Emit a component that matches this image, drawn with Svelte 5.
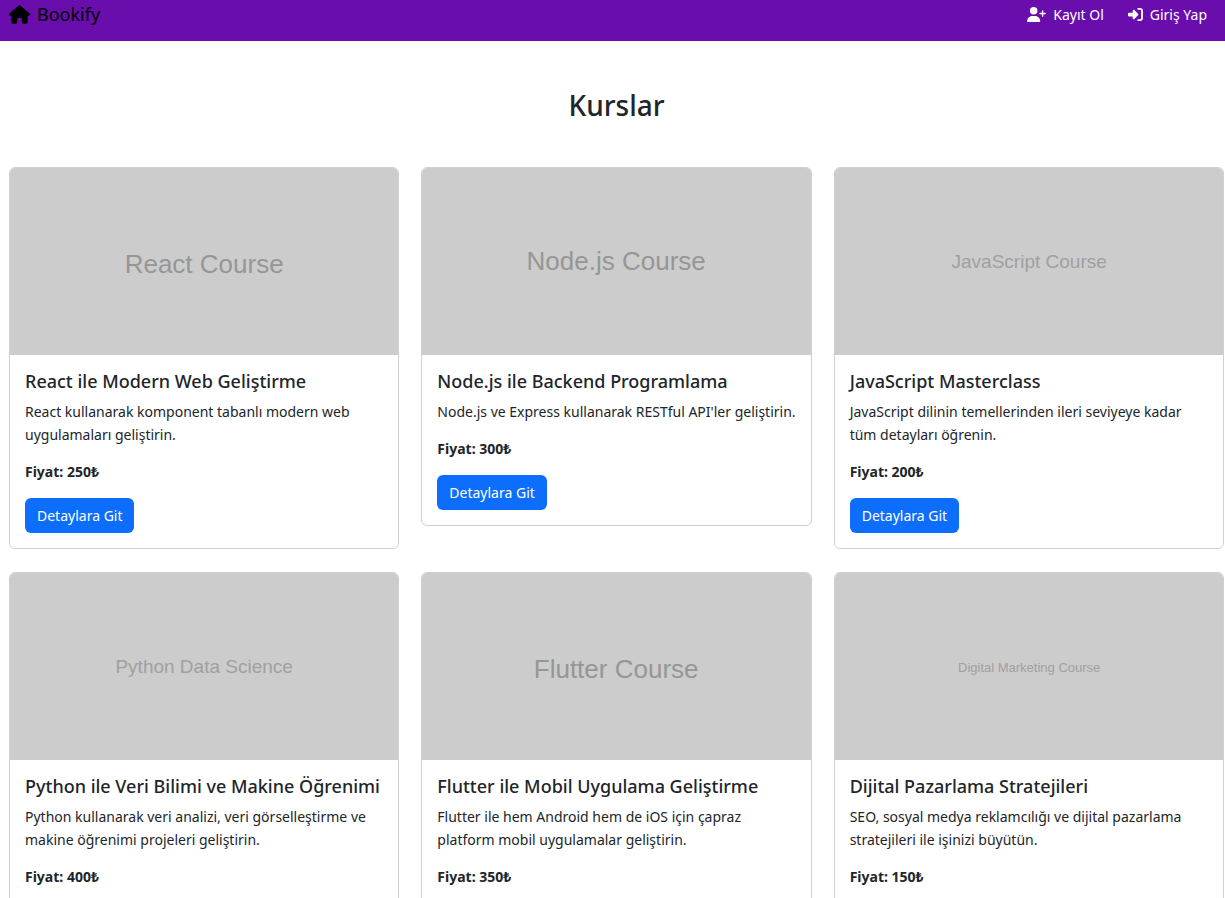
<script>
  const courses = [
    { cover: 'React Course', size: 26, baseline: 105, title: 'React ile Modern Web Geliştirme', text: 'React kullanarak komponent tabanlı modern web uygulamaları geliştirin.', price: 250 },
    { cover: 'Node.js Course', size: 26, baseline: 102, title: 'Node.js ile Backend Programlama', text: "Node.js ve Express kullanarak RESTful API'ler geliştirin.", price: 300 },
    { cover: 'JavaScript Course', size: 19, baseline: 100, title: 'JavaScript Masterclass', text: 'JavaScript dilinin temellerinden ileri seviyeye kadar tüm detayları öğrenin.', price: 200 },
    { cover: 'Python Data Science', size: 19, baseline: 100, title: 'Python ile Veri Bilimi ve Makine Öğrenimi', text: 'Python kullanarak veri analizi, veri görselleştirme ve makine öğrenimi projeleri geliştirin.', price: 400 },
    { cover: 'Flutter Course', size: 26, baseline: 105, title: 'Flutter ile Mobil Uygulama Geliştirme', text: 'Flutter ile hem Android hem de iOS için çapraz platform mobil uygulamalar geliştirin.', price: 350 },
    { cover: 'Digital Marketing Course', size: 13, baseline: 99, title: 'Dijital Pazarlama Stratejileri', text: 'SEO, sosyal medya reklamcılığı ve dijital pazarlama stratejileri ile işinizi büyütün.', price: 150 }
  ];
</script>

<header class="navbar">
  <a class="brand" href="#home">
    <svg class="house" viewBox="0 0 576 512" aria-hidden="true"><path d="M575.8 255.500c0 18-15 32.100-32 32.100h-32l.7 160.200c0 2.700-.2 5.400-.5 8.100V472c0 22.100-17.900 40-40 40H456c-1.100 0-2.200 0-3.300-.1c-1.400 .1-2.800 .1-4.200 .1H416 392c-22.100 0-40-17.900-40-40V448 384c0-17.700-14.300-32-32-32H256c-17.700 0-32 14.300-32 32v64 24c0 22.100-17.900 40-40 40H160 128.100c-1.500 0-3-.1-4.500-.2c-1.200 .1-2.400 .2-3.600 .2H104c-22.100 0-40-17.900-40-40V360c0-.9 0-1.900 .1-2.800V287.600H32c-18 0-32-14-32-32.100c0-9 3-17 10-24L266.400 8c7-7 15-8 22-8s15 2 21 7L564.800 231.500c8 7 12 15 11 24z" /></svg>
    <span>Bookify</span>
  </a>
  <nav class="links" aria-label="Hesap">
    <a href="#register">
      <svg class="user" viewBox="0 0 640 512" aria-hidden="true"><path d="M96 128a128 128 0 1 1 256 0A128 128 0 1 1 96 128zM0 482.300C0 383.800 79.800 304 178.300 304h91.400C368.200 304 448 383.800 448 482.300c0 16.400-13.300 29.700-29.700 29.700H29.700C13.300 512 0 498.700 0 482.300zM504 312V248H440c-13.300 0-24-10.700-24-24s10.700-24 24-24h64V136c0-13.300 10.700-24 24-24s24 10.700 24 24v64h64c13.300 0 24 10.700 24 24s-10.700 24-24 24H552v64c0 13.300-10.700 24-24 24s-24-10.700-24-24z" /></svg>
      <span>Kayıt Ol</span>
    </a>
    <a href="#login">
      <svg class="enter" viewBox="0 0 512 512" aria-hidden="true"><path d="M217.900 105.900L340.700 228.700c7.200 7.200 11.300 17.100 11.300 27.300s-4.100 20.100-11.300 27.300L217.900 406.100c-6.400 6.400-15 9.900-24 9.900c-18.700 0-33.900-15.200-33.900-33.900l0-62.100L32 320c-17.700 0-32-14.300-32-32l0-64c0-17.700 14.300-32 32-32l128 0 0-62.100c0-18.700 15.200-33.900 33.900-33.900c9 0 17.600 3.600 24 9.900zM352 416l64 0c17.700 0 32-14.300 32-32l0-256c0-17.700-14.300-32-32-32l-64 0c-17.700 0-32-14.300-32-32s14.300-32 32-32l64 0c53 0 96 43 96 96l0 256c0 53-43 96-96 96l-64 0c-17.700 0-32-14.300-32-32s14.300-32 32-32z" /></svg>
      <span>Giriş Yap</span>
    </a>
  </nav>
</header>

<main>
  <h1>Kurslar</h1>
  <div class="grid">
    {#each courses as course}
      <article class="card">
        <svg class="cover" viewBox="0 0 388 187" role="img" aria-label={course.cover}>
          <text class:light={course.size < 26} x="194" y={course.baseline} font-size={course.size} text-anchor="middle">{course.cover}</text>
        </svg>
        <div class="body">
          <h2>{course.title}</h2>
          <p>{course.text}</p>
          <strong>Fiyat: {course.price}₺</strong>
          <a class="button" href="#details">Detaylara Git</a>
        </div>
      </article>
    {/each}
  </div>
</main>

<style>
  :global(body) {
    margin: 0;
    background: #fff;
    color: #212529;
    font: 14px/23px "Segoe UI", "Noto Sans", "Open Sans", sans-serif;
  }
  a {
    color: inherit;
    text-decoration: none;
  }
  svg {
    display: block;
    fill: currentColor;
  }
  .navbar {
    display: flex;
    justify-content: space-between;
    align-items: flex-start;
    box-sizing: border-box;
    min-height: 41px;
    padding: 0 18px 0 9px;
    background: #6a0dad;
  }
  .brand {
    display: flex;
    align-items: center;
    gap: 7px;
    color: #000;
    font-size: 18px;
    line-height: 29px;
  }
  .links {
    display: flex;
    gap: 24px;
    color: #fff;
    line-height: 29px;
  }
  .links a {
    display: flex;
    align-items: center;
    gap: 7px;
  }
  .house {
    width: 21px;
    height: 19px;
  }
  .user {
    width: 19px;
    height: 15px;
  }
  .enter {
    width: 15px;
    height: 15px;
  }
  main {
    padding: 46px 1px 24px 9px;
  }
  h1 {
    margin: 0 0 44px;
    font-size: 28px;
    font-weight: 500;
    line-height: 36px;
    text-align: center;
  }
  .grid {
    display: grid;
    grid-template-columns: repeat(3, 1fr);
    align-items: start;
    gap: 23px 22px;
  }
  .card {
    border: 1px solid #d0d0d1;
    border-radius: 6px;
    overflow: hidden;
  }
  .cover {
    width: 100%;
    background: #ccc;
    font-family: "Liberation Sans", Arial, sans-serif;
  }
  .cover text {
    fill: #969696;
  }
  .cover .light {
    fill: #a0a0a0;
  }
  .body {
    display: flex;
    flex-direction: column;
    align-items: flex-start;
    padding: 15px;
  }
  h2 {
    margin: 0 0 8px;
    font-size: 18px;
    font-weight: 500;
    line-height: 22px;
  }
  p {
    margin: 0 0 14px;
  }
  strong {
    margin: 0 0 15px;
    font-weight: 700;
  }
  .button {
    padding: 6px 12px;
    border-radius: 6px;
    background: #0d6efd;
    color: #fff;
  }
</style>
